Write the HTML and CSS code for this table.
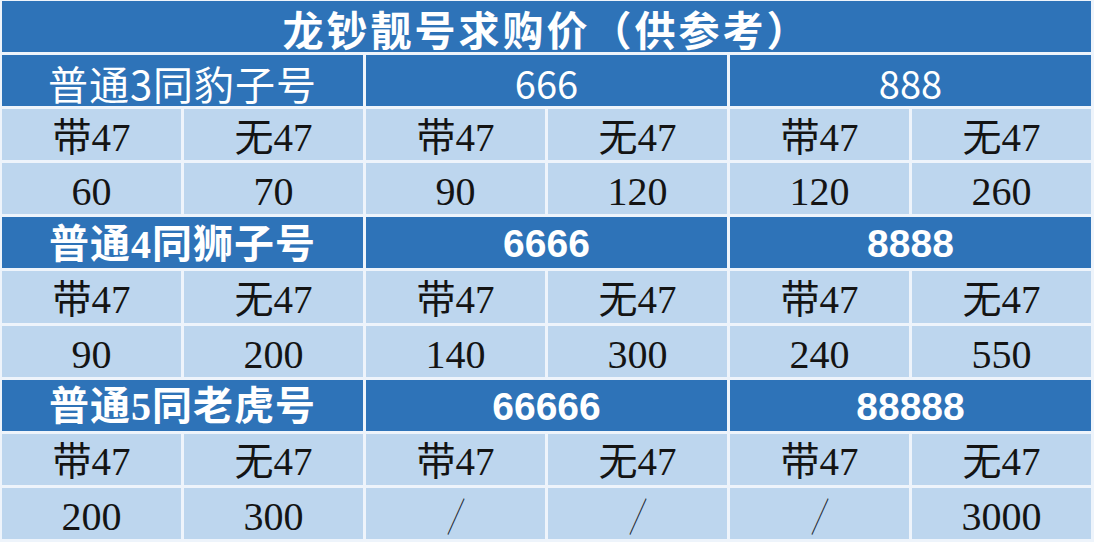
FILE: index.html
```html
<!DOCTYPE html>
<html lang="zh-CN">
<head>
<meta charset="utf-8">
<title>龙钞靓号求购价</title>
<link rel="stylesheet" href="styles.css">
</head>
<body>
<div class="sheet">
  <div class="cell title span6">龙钞靓号求购价（供参考）</div>

  <div class="cell head span2 cat reg">普通3同豹子号</div>
  <div class="cell head span2 num reg">666</div>
  <div class="cell head span2 num reg">888</div>
  <div class="cell body">带47</div>
  <div class="cell body">无47</div>
  <div class="cell body">带47</div>
  <div class="cell body">无47</div>
  <div class="cell body">带47</div>
  <div class="cell body">无47</div>
  <div class="cell body val">60</div>
  <div class="cell body val">70</div>
  <div class="cell body val">90</div>
  <div class="cell body val">120</div>
  <div class="cell body val">120</div>
  <div class="cell body val">260</div>

  <div class="cell head span2 cat bold">普通4同狮子号</div>
  <div class="cell head span2 num bold">6666</div>
  <div class="cell head span2 num bold">8888</div>
  <div class="cell body">带47</div>
  <div class="cell body">无47</div>
  <div class="cell body">带47</div>
  <div class="cell body">无47</div>
  <div class="cell body">带47</div>
  <div class="cell body">无47</div>
  <div class="cell body val">90</div>
  <div class="cell body val">200</div>
  <div class="cell body val">140</div>
  <div class="cell body val">300</div>
  <div class="cell body val">240</div>
  <div class="cell body val">550</div>

  <div class="cell head span2 cat bold">普通5同老虎号</div>
  <div class="cell head span2 num bold">66666</div>
  <div class="cell head span2 num bold">88888</div>
  <div class="cell body">带47</div>
  <div class="cell body">无47</div>
  <div class="cell body">带47</div>
  <div class="cell body">无47</div>
  <div class="cell body">带47</div>
  <div class="cell body">无47</div>
  <div class="cell body val">200</div>
  <div class="cell body val">300</div>
  <div class="cell body slash"><span class="slash-glyph">／</span></div>
  <div class="cell body slash"><span class="slash-glyph">／</span></div>
  <div class="cell body slash"><span class="slash-glyph">／</span></div>
  <div class="cell body val">3000</div>
</div>
</body>
</html>
```
FILE: styles.css
```css
html, body {
  margin: 0;
  padding: 0;
  background: #f4f8fc;
}

.sheet {
  box-sizing: border-box;
  width: 1094px;
  height: 542px;
  padding: 1px 3px 3px 2px;
  display: grid;
  grid-template-columns: repeat(6, 1fr);
  grid-template-rows: repeat(10, 1fr);
  gap: 3px;
  background: #eef4fb;
}

.cell {
  display: flex;
  align-items: center;
  justify-content: center;
  line-height: 1.1;
  white-space: nowrap;
  min-height: 0;
}

.span2 { grid-column: span 2; }
.span6 { grid-column: span 6; }

.title {
  background: #2e73b8;
  color: #fff;
  font-family: "Noto Sans CJK SC", sans-serif;
  font-weight: 700;
  font-size: 41px;
  letter-spacing: 3px;
  padding-top: 4px;
}

.head {
  background: #2e73b8;
  color: #fff;
  padding-top: 4px;
}

.cat {
  font-size: 40px;
  letter-spacing: 1px;
}

.cat.reg {
  font-family: "Noto Sans CJK SC", sans-serif;
  font-weight: 400;
}

.cat.bold {
  font-family: "Liberation Serif", "Noto Sans CJK SC", serif;
  font-weight: 700;
}

.num.reg {
  font-family: "Noto Sans CJK SC", sans-serif;
  font-weight: 400;
  font-size: 38px;
}

.num.bold {
  font-family: "Liberation Sans", sans-serif;
  font-weight: 700;
  font-size: 39px;
}

.body {
  background: #bdd6ee;
  color: #141414;
  font-family: "Liberation Serif", "Noto Sans CJK SC", serif;
  font-size: 39px;
  padding-top: 7px;
}

.val {
  font-size: 40px;
}

.body.slash {
  font-family: "Noto Sans CJK SC", sans-serif;
  font-weight: 400;
  font-size: 40px;
  line-height: 1;
  padding-top: 4px;
  color: #222831;
}

.slash-glyph {
  display: inline-block;
  width: 40px;
  text-align: center;
  transform: scaleX(0.45);
}
```
